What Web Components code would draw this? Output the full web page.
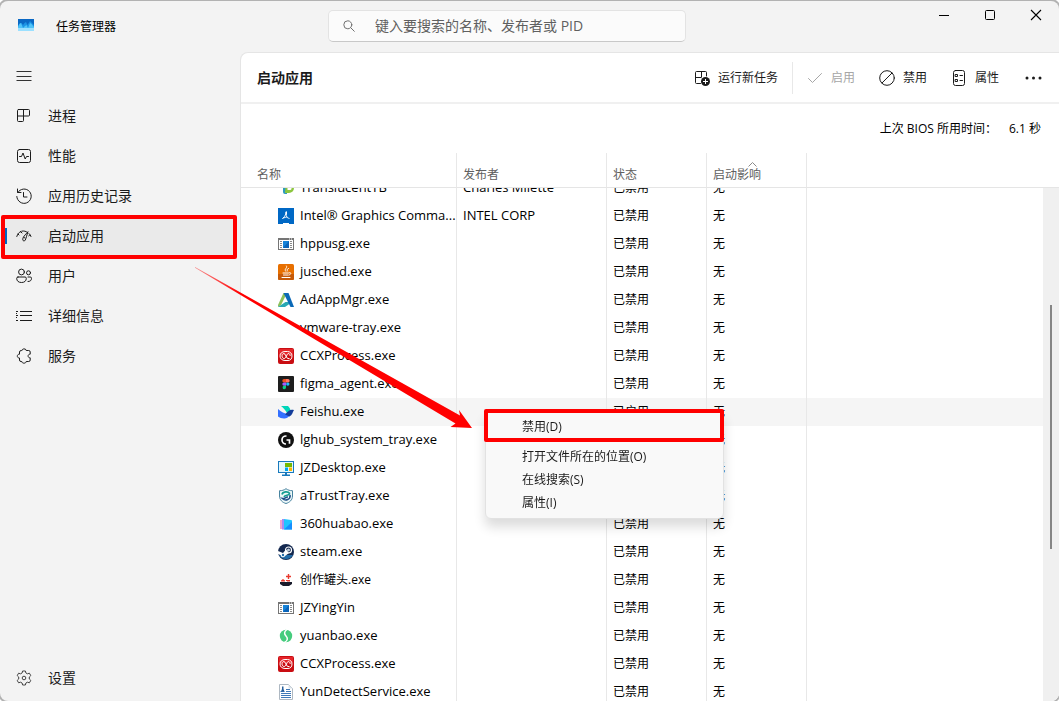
<!DOCTYPE html>
<html lang="zh-CN">
<head>
  <meta charset="UTF-8">
  <meta name="viewport" content="width=device-width, initial-scale=1.0">
  <title>任务管理器</title>
  <style>
    html, body {
      height: 100%;
      margin: 0;
      background: #fff;
    }
    body {
      overflow: hidden;
      font: 12px/16px "Open Sans", "Noto Sans CJK SC", sans-serif;
      color: #1b1b1b;
    }
  </style>
</head>
<body>
  <tm-window>
    <tm-titlebar slot="titlebar">任务管理器</tm-titlebar>
    <tm-nav slot="nav">
      <tm-nav-item icon="processes">进程</tm-nav-item>
      <tm-nav-item icon="performance">性能</tm-nav-item>
      <tm-nav-item icon="history">应用历史记录</tm-nav-item>
      <tm-nav-item icon="startup" selected>启动应用</tm-nav-item>
      <tm-nav-item icon="users">用户</tm-nav-item>
      <tm-nav-item icon="details">详细信息</tm-nav-item>
      <tm-nav-item icon="services">服务</tm-nav-item>
      <tm-nav-item icon="settings" slot="bottom">设置</tm-nav-item>
    </tm-nav>
    <tm-command-bar>
      <span slot="heading">启动应用</span>
      <tm-command icon="newtask">运行新任务</tm-command>
      <tm-command icon="check" divided disabled>启用</tm-command>
      <tm-command icon="block">禁用</tm-command>
      <tm-command icon="props">属性</tm-command>
      <tm-command icon="more" label="更多"></tm-command>
    </tm-command-bar>
    <tm-bios-time value="6.1 秒">上次 BIOS 所用时间：</tm-bios-time>
    <tm-startup-list></tm-startup-list>
    <tm-context-menu slot="overlay"></tm-context-menu>
    <tm-arrow slot="overlay"></tm-arrow>
  </tm-window>

  <template id="window">
    <style>
      :host {
        position: relative;
        display: grid;
        grid-template: 51px minmax(0, 1fr) / 240px minmax(0, 1fr);
        height: calc(100vh - 1px);
        margin-top: 1px;
        overflow: clip;
        overflow-clip-margin: 2px;
        background: #f3f3f3;
        border-radius: 8px;
        box-shadow: 0 0 0 2px #b2b2b2;
      }
      .titlebar {
        grid-column: 1 / 3;
      }
      main {
        display: flex;
        flex-direction: column;
        min-width: 0;
        background: #fff;
        border: solid #e5e5e5;
        border-width: 1px 0 0 1px;
        border-radius: 8px 0 8px 0;
        overflow: hidden;
      }
    </style>
    <div class="titlebar"><slot name="titlebar"></slot></div>
    <slot name="nav"></slot>
    <main><slot></slot></main>
    <slot name="overlay"></slot>
  </template>

  <template id="titlebar">
    <style>
      :host {
        display: grid;
        grid-template-columns: 328px minmax(0, 358px) 1fr;
        height: 51px;
      }
      .brand {
        display: flex;
        align-items: center;
        gap: 22px;
        padding: 0 0 0 18px;
        color: #000;
      }
      .brand tm-icon {
        margin-bottom: 4px;
      }
      label {
        display: flex;
        align-items: center;
        gap: 20px;
        box-sizing: border-box;
        height: 32px;
        margin-top: 9px;
        padding: 0 12px 0 14px;
        background: #fbfbfb;
        border: 1px solid #e3e3e3;
        border-bottom-color: #c8c8c8;
        border-radius: 5px;
        color: #707070;
      }
      input {
        flex: 1;
        min-width: 0;
        padding: 0;
        border: 0;
        outline: 0;
        background: none;
        font: inherit;
        font-size: 14px;
        color: #1b1b1b;
      }
      input::placeholder {
        color: #606060;
        opacity: 1;
      }
      .controls {
        display: flex;
        justify-content: flex-end;
      }
      button {
        display: grid;
        place-items: center;
        width: 46px;
        height: 28px;
        padding: 0;
        border: 0;
        background: none;
        color: #000;
      }
      button:hover {
        background: #e5e5e5;
      }
    </style>
    <div class="brand"><tm-icon name="app"></tm-icon><slot></slot></div>
    <label>
      <tm-icon name="search"></tm-icon>
      <input type="text" aria-label="搜索" placeholder="键入要搜索的名称、发布者或 PID">
    </label>
    <div class="controls">
      <button aria-label="最小化"><tm-icon name="min"></tm-icon></button>
      <button aria-label="最大化"><tm-icon name="max"></tm-icon></button>
      <button aria-label="关闭"><tm-icon name="close"></tm-icon></button>
    </div>
  </template>

  <template id="nav">
    <style>
      :host {
        display: flex;
        flex-direction: column;
        padding: 4px 4px 3px;
      }
      button {
        display: flex;
        align-items: center;
        width: 40px;
        height: 40px;
        padding: 0 0 0 12px;
        border: 0;
        background: none;
        color: inherit;
      }
      nav {
        flex: 1;
      }
    </style>
    <button aria-label="菜单"><tm-icon name="menu"></tm-icon></button>
    <nav><slot></slot></nav>
    <slot name="bottom"></slot>
  </template>

  <template id="nav-item">
    <style>
      :host {
        position: relative;
        display: block;
      }
      a {
        display: flex;
        align-items: center;
        gap: 16px;
        height: 40px;
        padding-left: 12px;
        font-size: 14px;
        line-height: 20px;
        color: inherit;
        text-decoration: none;
      }
      :host([selected]) a {
        background: linear-gradient(#0067c0, #0067c0) left center / 3px 16px no-repeat #eaeaea;
      }
      /* marker drawn round the current page */
      :host([selected])::after {
        content: "";
        position: absolute;
        inset: -1px -1px -3px -3px;
        border: 4px solid #f00;
        border-radius: 2px;
        pointer-events: none;
      }
    </style>
    <a href="#"><tm-icon></tm-icon><slot></slot></a>
  </template>

  <template id="command-bar">
    <style>
      :host {
        display: flex;
        align-items: center;
        flex: none;
        height: 49px;
        padding: 0 12px 0 16px;
        border-bottom: 2px solid #f0f0f0;
      }
      h1 {
        flex: 1;
        margin: 0;
        font-size: 14px;
        line-height: 20px;
        font-weight: 600;
      }
    </style>
    <h1><slot name="heading"></slot></h1>
    <slot></slot>
  </template>

  <template id="command">
    <style>
      :host {
        display: block;
      }
      :host([divided]) {
        margin-left: 2px;
        padding-left: 2px;
        border-left: 1px solid #e8e8e8;
      }
      button {
        display: flex;
        align-items: center;
        gap: 8px;
        height: 32px;
        padding: 0 12px;
        border: 0;
        background: none;
        font: inherit;
        color: inherit;
      }
      button:disabled {
        color: #a6a6a6;
      }
      :host([label]) button {
        padding: 0 5px 0 14px;
        gap: 0;
      }
    </style>
    <button><tm-icon></tm-icon><slot></slot></button>
  </template>

  <template id="bios-time">
    <style>
      :host {
        display: flex;
        flex: none;
        justify-content: flex-end;
        align-items: center;
        gap: 12px;
        height: 49px;
        padding-right: 18px;
        color: #000;
      }
    </style>
    <slot></slot><output></output>
  </template>

  <template id="startup-list">
    <style>
      :host {
        display: flex;
        flex: 1;
        min-height: 0;
      }
      .scroller {
        flex: 1;
        min-width: 0;
        overflow: auto;
        scrollbar-width: none;
      }
      table {
        width: 100%;
        table-layout: fixed;
        border-spacing: 0;
        color: #000;
      }
      th, td {
        box-sizing: border-box;
        padding: 0 6px;
        border-right: 1px solid #e8e8e8;
        text-align: left;
        white-space: nowrap;
        overflow: hidden;
      }
      th:last-child, td:last-child {
        border-right: 0;
      }
      thead th {
        position: sticky;
        top: 0;
        z-index: 1;
        height: 35px;
        padding-bottom: 4px;
        background: #fff;
        border-bottom: 1px solid #e5e5e5;
        vertical-align: bottom;
        font-weight: 400;
        color: #606060;
      }
      thead th:first-child {
        padding-left: 16px;
      }
      .name { width: 216px; }
      .publisher { width: 150px; }
      .status, .impact { width: 100px; }
      .impact tm-icon {
        display: flex;
        justify-content: center;
        padding-right: 8px;
      }
      td {
        height: 28px;
      }
      tbody th {
        font-weight: 400;
        padding-left: 37px;
        padding-right: 0;
      }
      .app {
        display: flex;
        align-items: center;
        gap: 6px;
      }
      .latin {
        padding-bottom: 2px;
        font-size: 13px;
      }
      .hover {
        background: #f5f5f5;
      }
      .track {
        display: grid;
        grid-template-rows: 117fr 244fr 152fr;
        justify-items: center;
        width: 16px;
        margin-top: 34px;
        background: #f0f0f0;
        border-top: 1px solid #e5e5e5;
      }
      .thumb {
        grid-row: 2;
        width: 2px;
        background: #868686;
      }
    </style>
    <div class="scroller">
      <table>
        <thead>
          <tr>
            <th class="name">名称</th>
            <th class="publisher">发布者</th>
            <th class="status">状态</th>
            <th class="impact"><tm-icon name="caret"></tm-icon>启动影响</th>
            <th></th>
          </tr>
        </thead>
        <tbody></tbody>
      </table>
    </div>
    <div class="track"><div class="thumb"></div></div>
  </template>

  <template id="context-menu">
    <style>
      :host {
        position: absolute;
        left: 485px;
        top: 409px;
        z-index: 2;
        box-sizing: border-box;
        width: 239px;
        padding: 4px 0;
        background: #f9f9f9;
        border: 1px solid #e2e2e2;
        border-radius: 6px;
        box-shadow: 0 8px 12px rgba(0, 0, 0, .14);
      }
      button {
        display: block;
        width: 100%;
        height: 23px;
        padding: 0 36px;
        border: 0;
        background: none;
        font: inherit;
        text-align: left;
        color: #1b1b1b;
      }
      .first {
        position: relative;
        margin-bottom: 7px;
      }
      .first::after {
        content: "";
        position: absolute;
        inset: -6px -1px -4px -2px;
        border: 4px solid #f00;
        border-radius: 2px;
      }
    </style>
    <button class="first">禁用(D)</button>
    <button>打开文件所在的位置(O)</button>
    <button>在线搜索(S)</button>
    <button>属性(I)</button>
  </template>

  <template id="arrow">
    <style>
      :host {
        position: absolute;
        left: 190px;
        top: 259px;
        z-index: 3;
        pointer-events: none;
      }
      svg {
        display: block;
      }
    </style>
    <svg width="290" height="176" viewBox="190 260 290 176">
      <defs>
        <linearGradient id="fade" x1="195" y1="267" x2="240" y2="293" gradientUnits="userSpaceOnUse">
          <stop offset="0" stop-color="#f00" stop-opacity=".4"/>
          <stop offset="1" stop-color="#f00"/>
        </linearGradient>
      </defs>
      <path fill="url(#fade)" d="M195 267 460 415.500 459 410 472 428 450.500 427 455.500 423.500 195 267.800Z"/>
    </svg>
  </template>

  <script>
    // [width, height, viewBox, markup]
    const line = 'fill="none" stroke="currentColor" stroke-linecap="round" stroke-linejoin="round"';
    const exe = '<path fill="#757575" d="M0 2h16v12H0z"/><path fill="#fff" d="M1 4h14v9H1z"/><path fill="#1683d8" d="M5 5h6v7H5z"/><path fill="#0a63b8" d="m11 5v7H5z"/><path stroke="#8a8a8a" d="M2 5.500h2M2 7.500h2M2 9.500h2M2 11.500h2M12 5.500h2M12 7.500h2M12 9.500h2M12 11.500h2"/><path stroke="#fff" d="M11 3h1M13 3h1"/>';
    const ccx = '<rect width="16" height="16" rx="2" fill="#c90d12"/><path fill="#e5252a" d="M1 1h14v6H1z"/><g fill="none" stroke="#fff"><path d="M7 3.500C4.200 3.500 2 5.300 2 8s2.200 4.500 5 4.500h3c2.500 0 4-1.800 4-4.500s-2-4.500-4.500-4.500z"/><path d="M11.500 10.500H10C8 10.500 8 5.500 5.800 5.500 4.500 5.500 4 6.800 4 8s.8 2.500 2 2.500 1.700-1 2.500-2.500S9.500 5.500 10.500 5.500 12.200 6.800 12.200 8"/></g>';
    const icons = {
      app: [16, 12, '0 0 16 12', '<path fill="#0a68c4" d="M0 0h16v12H0z"/><path fill="#1b93e4" d="M0 6.500 2 4h1.500L5 6l1.500-2L8 3l1.500 3L12 2l2 2 2 2v3H0z"/><path fill="#4fc3f8" d="m0 8 1.500-3L3 4l2 5 2-2 1.500-1 1.500 3 2-5 1.500 1L16 8v4H0z"/><path fill="#9be0ff" d="M0 9h16v3H0z"/>'],
      search: [12, 12, '0 0 12 12', `<g ${line}><circle cx="4.800" cy="4.800" r="4"/><path d="m7.800 7.800 3.500 3.500"/></g>`],
      min: [12, 12, '0 0 12 12', '<path stroke="currentColor" d="M1 6.500h10"/>'],
      max: [12, 12, '0 0 12 12', '<rect x="1.500" y="1.500" width="9" height="9" rx="1" fill="none" stroke="currentColor"/>'],
      close: [12, 12, '0 0 12 12', '<path stroke="currentColor" stroke-width="1.100" d="m1 1 10 10M11 1 1 11"/>'],
      menu: [16, 16, '0 0 16 16', '<path stroke="#333" d="M.5 3.500h15M.5 8.500h15M.5 12.500h15"/>'],
      caret: [9, 5, '0 0 9 5', '<path fill="none" stroke="#8a8a8a" d="m.5 4.500 4-4 4 4"/>'],
      processes: [16, 16, '0 0 16 16', `<path ${line} d="M2.500 1.500h10a1 1 0 0 1 1 1v4.500a1 1 0 0 1-1 1h-5v4.500a1 1 0 0 1-1 1h-4a1 1 0 0 1-1-1v-10a1 1 0 0 1 1-1zM1.500 8h6M7.500 1.500V8"/>`],
      performance: [16, 16, '0 0 16 16', `<g ${line}><rect x="1.500" y="1.500" width="13" height="13" rx="2"/><path d="M3.500 8.500h2L7 5l2.200 6 1.300-2.500h2"/></g>`],
      history: [16, 16, '0 0 16 16', `<path ${line} d="M1.500 1v3.500H5M1.800 4.500A7.200 7.200 0 1 1 .8 8.500M7.500 4.500V9H11"/>`],
      startup: [16, 16, '0 0 16 16', `<path ${line} d="M.8 8.500C1.600 6 3 4.200 5 3.500M2 6l1 1M4.500 3.500l1.500 1.500M6 3.100c2-.4 4 .1 5.500 1.400M13 5.500c1 .8 1.600 1.800 2 3M13.800 7l-1 .8M11.800 4c-2.300 2.500-5.500 5.500-5 7.800.3 1.500 1.800 1.600 2.500.2.900-2 1.600-5 2.500-8M8 9.500l1 .500"/>`],
      users: [16, 16, '0 0 16 16', `<g ${line}><circle cx="5.500" cy="4" r="2.900"/><circle cx="12.500" cy="4.800" r="2"/><path d="M2 9h7a1.300 1.300 0 0 1 1.300 1.300C10.300 13 8.500 14.500 5.500 14.500S.7 13 .7 10.300A1.300 1.300 0 0 1 2 9zM12 9h2.200a1.300 1.300 0 0 1 1.300 1.300c0 2.200-1.400 3.300-3.500 3.200"/></g>`],
      details: [16, 16, '0 0 16 16', '<path stroke="currentColor" d="M4 3.500h12M4 7.500h12M4 12.500h12"/><path fill="currentColor" d="M0 3h2v1H0zM0 5h1v1H0zM0 7h2v1H0zM0 9h1v1H0zM0 12h2v1H0z"/>'],
      services: [16, 16, '0 0 16 16', `<path ${line} d="M5.800 2.500c0-2.200 4.400-2.200 4.400 0h2.500a1.500 1.500 0 0 1 1.500 1.500v2.200c-2.800-.2-2.800 3.800 0 3.600V12a1.500 1.500 0 0 1-1.500 1.500h-2.500c0 2.200-4.400 2.200-4.400 0H5A1.500 1.500 0 0 1 3.500 12v-2C.6 10.200.6 6 3.500 6.200V4A1.500 1.500 0 0 1 5 2.500z"/>`],
      settings: [16, 16, '0 0 16 16', '<g fill="none" stroke="#444" stroke-linejoin="round"><circle cx="8" cy="8" r="1.800"/><path d="M6.600 1h2.800l.5 2 1.500.8 2-.6 1.400 2.400L13.300 7v2l1.500 1.400-1.400 2.400-2-.6-1.500.8-.5 2H6.600l-.5-2-1.500-.8-2 .6-1.400-2.400L2.700 9V7L1.200 5.600l1.400-2.400 2 .6L6.100 3z"/></g>'],
      newtask: [16, 16, '0 0 16 16', `<path ${line} d="M6.500 13.500H2.500a1 1 0 0 1-1-1v-10a1 1 0 0 1 1-1h9a1 1 0 0 1 1 1V6M1.500 7.500H7M7.500 1.500V7"/><circle cx="11.500" cy="11.500" r="4.500" fill="currentColor"/><path stroke="#fff" d="M9 11.500h5M11.500 9v5"/>`],
      check: [16, 16, '0 0 16 16', `<path ${line} d="m1.500 8.500 4 4 9-9"/>`],
      block: [16, 16, '0 0 16 16', `<g ${line}><circle cx="8" cy="8" r="7.300"/><path d="m3 13 10-10"/></g>`],
      props: [16, 16, '0 0 16 16', `<g ${line}><rect x="2.500" y=".5" width="11" height="15" rx="2"/><path d="M4.500 4.500h2v2h-2zM4.500 9.500h2v2h-2zM9 5.500h2.500M9 10.500h2.500"/></g>`],
      more: [17, 4, '0 0 17 4', '<g fill="currentColor"><circle cx="2" cy="2" r="1.500"/><circle cx="8.500" cy="2" r="1.500"/><circle cx="15" cy="2" r="1.500"/></g>'],
      translucent: [16, 16, '0 0 16 16', '<path fill="#2d9bbd" d="M5 1h4v13H7a2 2 0 0 1-2-2z"/><path fill="#8cc63f" d="M8 2h3a5 5 0 0 1 5 5v1a5 5 0 0 1-5 5H7z"/><path fill="#fff" d="M9.500 7H12a1.500 1.500 0 0 1 0 3H9.500z"/>'],
      intel: [16, 16, '0 0 16 16', '<path fill="#0068c5" d="M0 0h16v16H0z"/><path fill="#fff" d="M5 15h6v1H5z"/><path fill="none" stroke="#fff" stroke-width=".9" d="M8.300 3.500C8 6 7.500 8 4.500 10.500M8.300 3.500v4c0 2 1.500 2.500 3.200 3M4.500 10.500c2-1 3.500-1.500 5-1.500"/><path fill="#fff" d="M7.500 4h1.500v2L7.500 7z"/>'],
      exe: [16, 16, '0 0 16 16', exe],
      java: [16, 16, '0 0 16 16', '<rect width="16" height="16" rx="1.500" fill="#e76f00"/><path fill="#c65a08" d="M0 10h16v4.500a1.500 1.500 0 0 1-1.500 1.500h-13A1.500 1.500 0 0 1 0 14.500z"/><g fill="none" stroke="#fff" stroke-linecap="round"><path d="M8.500 2c1.500 2-3 3-.8 5.300M10.500 4.500C8.500 5.500 9 6 9.500 7M5 9h5.500M5.500 11h4.500M4 13.500h8M11.500 8.700c2-.4 2 1.700-.5 2.300"/></g>'],
      autodesk: [16, 16, '0 0 16 16', '<path fill="#8cc05a" d="M5.500 1H9L3 13l-3 2V13z"/><path fill="#28a8b4" d="m0 15 7.500-5H11v2.300L7 15z"/><path fill="#0b69b7" d="M5.500 1h5L16 15h-3.500z"/>'],
      none: [16, 16, '0 0 16 16', ''],
      ccx: [16, 16, '0 0 16 16', ccx],
      figma: [16, 16, '0 0 16 16', '<rect width="16" height="16" rx="1" fill="#1e1e1e"/><path fill="#f24e1e" d="M8 3H6a1.700 1.700 0 0 0 0 3.400h2z"/><path fill="#ff7262" d="M8 3h2a1.700 1.700 0 0 1 0 3.400H8z"/><path fill="#a259ff" d="M8 6.400H6a1.700 1.700 0 0 0 0 3.400h2z"/><circle cx="9.800" cy="8.100" r="1.700" fill="#1abcfe"/><path fill="#0acf83" d="M8 9.800H6a1.700 1.700 0 1 0 2 1.700z"/>'],
      feishu: [16, 16, '0 0 16 16', '<path fill="#00d6b9" d="M3 2h7c1.600 1.500 2.300 3 2.600 5L9 9C7.500 6 5.500 4 3 2z"/><path fill="#3370ff" d="M0 5c4 4 8 5.500 13 4.500-2 4-4.500 5-7 5-2.500 0-4.500-.8-6-2z"/><path fill="#133c9a" d="M8 9.500C10.500 6 13 5 16 6c-1.500 2.500-1.700 5-4.500 6.500L7 10.500z"/>'],
      lghub: [16, 16, '0 0 16 16', '<circle cx="8" cy="8" r="8" fill="#111"/><path fill="none" stroke="#fff" stroke-width="1.700" d="M8.500 4H8a4 4 0 0 0 0 8M8.500 8h3v3.800"/>'],
      jzdesktop: [16, 16, '0 0 16 16', '<path fill="#1879bd" d="M0 1h16v12H0zM4 14.500h8V16H4zM7 13h2v2H7z"/><path fill="#e3f6fc" d="M1 2h14v10H1z"/><path fill="#73b900" d="M7 3h7v4H7z"/><path fill="#00a4ef" d="M7 7.500h3V11H7z"/><path fill="#ffb400" d="M11 7.500h3V11h-3z"/>'],
      atrust: [16, 16, '0 0 16 16', '<path fill="#eef8f8" stroke="#47839f" d="M8 .7c2 1.500 4 2 6.500 2V8c0 4-3 6.500-6.500 7.500C4.500 14.500 1.500 12 1.500 8V2.700C4 2.700 6 2.200 8 .7z"/><path fill="none" stroke="#159c91" stroke-width="1.600" d="M4 6.500c.5-3 6-3.500 7.500-1.200C11.500 8 7 6.500 6 9"/><path fill="none" stroke="#214f8a" stroke-width="1.600" d="M12 7c.8 4.500-4.500 6.500-7.500 3.500C7 11 7.500 8.800 10 9"/>'],
      huabao: [16, 16, '0 0 16 16', '<path fill="#f4a5c9" d="M2 4h2v9H2z"/><path fill="#a98cf2" d="M4 3h2v10.500H4z"/><path fill="#20c5ff" d="m6 3 7 1a1 1 0 0 1 1 1v8.500H6z"/><path fill="#168eff" d="m14 6v7.500H6z"/>'],
      steam: [16, 16, '0 0 16 16', '<circle cx="8" cy="8" r="8" fill="#14284f"/><path fill="#226ca8" d="M1 11h14a8 8 0 0 1-14 0z"/><circle cx="10.500" cy="6" r="3" fill="none" stroke="#fff" stroke-width="1.200"/><circle cx="10.500" cy="6" r="1.500" fill="#c6d4e1"/><path fill="#fff" d="m0 7 5 2 3-3.500L11 9l-4 3a2.200 2.200 0 0 1-4.200-.8L0 10z"/><circle cx="5" cy="11" r="1.200" fill="#226ca8"/>'],
      can: [16, 16, '0 0 16 16', '<path stroke="#e93a2f" stroke-width="1.400" d="M10.500 2v5M8 4.500h5"/><path fill="#e93a2f" d="M3 8.500 5 7l2 1.500v1H3zM8 8h4v1.500H8z"/><path fill="#191b2b" d="M2 10h12v2l-3 2H5l-3-2z"/><path fill="#fff" d="M7 9h2v1H7z"/>'],
      yuanbao: [16, 16, '0 0 16 16', '<circle cx="8" cy="8" r="6.200" fill="#45cc7d"/><path fill="none" stroke="#fff" stroke-width="1.500" d="M9 1.500C6 3.500 6 6 8 8s2 4.500-1.500 6.500"/>'],
      document: [16, 16, '0 0 16 16', '<path fill="#fff" stroke="#aeb8c2" d="M1.500.5h9l4 4v11h-13z"/><path fill="#dce3ea" d="M10.500.5v4h4z"/><path stroke="#3f79b8" d="M8 5.500h4M8 7.500h5M3 9.500h10M3 11.500h10M3 13.500h10M2.500 7.500h4"/><path fill="#275f9c" d="M4 2.500h1.500V5l1 2.500H3L4 5z"/>']
    };

    const apps = [
      ['translucent', 'TranslucentTB', 'Charles Milette'],
      ['intel', 'Intel® Graphics Comma...', 'INTEL CORP'],
      ['exe', 'hppusg.exe'],
      ['java', 'jusched.exe'],
      ['autodesk', 'AdAppMgr.exe'],
      ['none', 'vmware-tray.exe'],
      ['ccx', 'CCXProcess.exe'],
      ['figma', 'figma_agent.exe'],
      ['feishu', 'Feishu.exe', '', '已启用'],
      ['lghub', 'lghub_system_tray.exe'],
      ['jzdesktop', 'JZDesktop.exe'],
      ['atrust', 'aTrustTray.exe'],
      ['huabao', '360huabao.exe'],
      ['steam', 'steam.exe'],
      ['can', '创作罐头.exe'],
      ['exe', 'JZYingYin'],
      ['yuanbao', 'yuanbao.exe'],
      ['ccx', 'CCXProcess.exe'],
      ['document', 'YunDetectService.exe']
    ];

    customElements.define('tm-icon', class extends HTMLElement {
      static observedAttributes = ['name'];
      constructor() {
        super();
        this.attachShadow({ mode: 'open' });
      }
      attributeChangedCallback() {
        const [w, h, box, markup] = icons[this.getAttribute('name')];
        this.shadowRoot.innerHTML = `
          <style>:host { display: inline-block; flex: none; } svg { display: block; }</style>
          <svg width="${w}" height="${h}" viewBox="${box}" aria-hidden="true">${markup}</svg>`;
      }
    });

    class TemplateElement extends HTMLElement {
      constructor() {
        super();
        const template = document.querySelector('#' + this.localName.replace('tm-', ''));
        this.attachShadow({ mode: 'open' });
        this.shadowRoot.append(document.importNode(template.content, true));
      }
      $(selector) {
        return this.shadowRoot.querySelector(selector);
      }
    }

    for (const name of ['window', 'titlebar', 'nav', 'command-bar', 'context-menu', 'arrow']) {
      customElements.define('tm-' + name, class extends TemplateElement {});
    }

    customElements.define('tm-nav-item', class extends TemplateElement {
      connectedCallback() {
        this.$('tm-icon').setAttribute('name', this.getAttribute('icon'));
        if (this.hasAttribute('selected')) this.$('a').setAttribute('aria-current', 'page');
      }
    });

    customElements.define('tm-command', class extends TemplateElement {
      connectedCallback() {
        this.$('tm-icon').setAttribute('name', this.getAttribute('icon'));
        this.$('button').disabled = this.hasAttribute('disabled');
        if (this.hasAttribute('label')) this.$('button').setAttribute('aria-label', this.getAttribute('label'));
      }
    });

    customElements.define('tm-bios-time', class extends TemplateElement {
      connectedCallback() {
        this.$('output').textContent = this.getAttribute('value');
      }
    });

    customElements.define('tm-startup-list', class extends TemplateElement {
      connectedCallback() {
        this.$('tbody').innerHTML = apps.map(([icon, name, publisher = '', status = '已禁用']) => `
          <tr class="${status === '已启用' ? 'hover' : ''}">
            <th scope="row"><div class="app"><tm-icon name="${icon}"></tm-icon><span class="${/^[\x00-\xff]+$/.test(name) ? 'latin' : ''}">${name}</span></div></th>
            <td class="latin">${publisher}</td>
            <td>${status}</td>
            <td>无</td>
            <td></td>
          </tr>`).join('');
        // start half a row down
        this.$('.scroller').scrollTop = 14;
      }
    });
  </script>
</body>
</html>
